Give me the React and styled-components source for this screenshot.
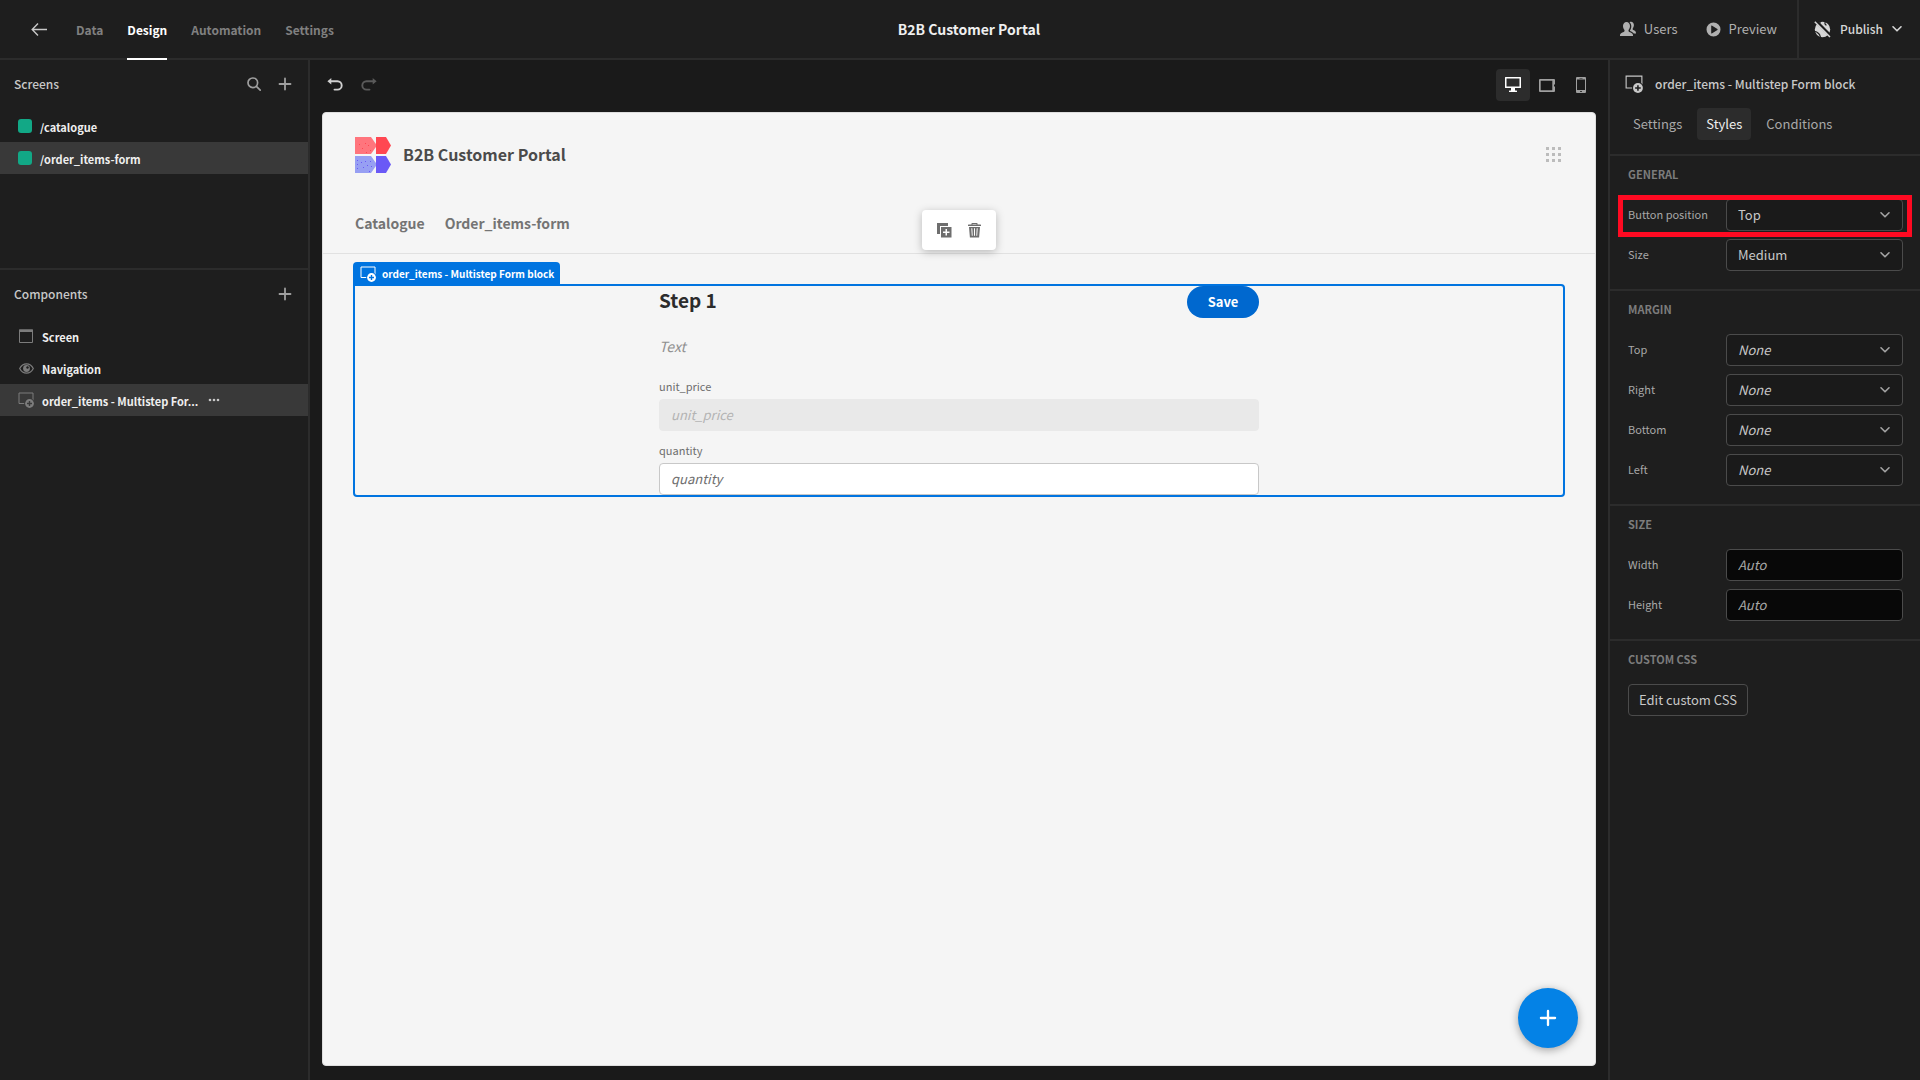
import React, { useState } from 'react';
import styled, { createGlobalStyle, css } from 'styled-components';

const GlobalStyle = createGlobalStyle`
    * {
        box-sizing: border-box;
    }

    body {
        margin: 0;
        background: #1a1a1a;
    }

    body, button, input, select {
        font-family: "Noto Sans CJK SC", "Open Sans", sans-serif;
        font-size: 13px;
        line-height: 20px;
    }

    button {
        border: 0;
        padding: 0;
        background: none;
        color: inherit;
        cursor: pointer;
    }

    svg {
        display: block;
        flex: none;
    }
`;

const Page = styled.div`
    display: flex;
    flex-direction: column;
    min-height: 100vh;
    color: #c8c8c8;
`;

/* top bar */

const TopBar = styled.header`
    display: flex;
    height: 60px;
    padding-left: 18px;
    background: #1e1e1e;
    border-bottom: 2px solid #2c2c2c;
`;

const TopLeft = styled.nav`
    flex: 1;
    display: flex;
    align-items: stretch;
    gap: 24px;
`;

const BackButton = styled.button`
    width: 22px;
    margin-left: 12px;
    color: #c8c8c8;
`;

const TopTab = styled.a`
    display: flex;
    align-items: center;
    margin-bottom: -2px;
    padding-top: 2px;
    border-bottom: 2px solid ${({ $active }) => ($active ? '#fff' : 'transparent')};
    color: ${({ $active }) => ($active ? '#fff' : '#808080')};
    font-size: 12px;
    font-weight: bold;
    text-decoration: none;
`;

const AppTitle = styled.h1`
    align-self: center;
    margin: 0;
    color: #efefef;
    font-size: 14px;
    font-weight: bold;
`;

const TopRight = styled.div`
    flex: 1;
    display: flex;
    justify-content: flex-end;
    gap: 28px;
`;

const TopButton = styled.button`
    display: flex;
    align-items: center;
    gap: 8px;
    color: #b0b0b0;
`;

const PublishButton = styled(TopButton)`
    gap: 9px;
    margin-left: -8px;
    padding: 0 18px 0 15px;
    border-left: 2px solid #2c2c2c;
    color: #d6d6d6;
    font-size: 12px;
    font-weight: 500;
`;

/* left panel */

const Body = styled.div`
    flex: 1;
    display: flex;
`;

const LeftPanel = styled.aside`
    width: 310px;
    background: #1e1e1e;
    border-right: 2px solid #2c2c2c;
`;

const Pane = styled.section`
    min-height: 210px;

    & + & {
        border-top: 2px solid #2c2c2c;
        margin-top: -2px;
    }
`;

const PaneHeader = styled.div`
    display: flex;
    align-items: center;
    gap: 17px;
    height: 48px;
    margin-bottom: 2px;
    padding: 0 16px 0 14px;
    color: #9f9f9f;
`;

const PaneTitle = styled.h2`
    flex: 1;
    margin: 0;
    color: #c8c8c8;
    font-size: 12px;
    font-weight: 500;
`;

const List = styled.ul`
    margin: 0;
    padding: 0;
    list-style: none;
`;

const ListItem = styled.li`
    display: flex;
    align-items: center;
    gap: 8px;
    height: 32px;
    padding-left: 18px;
    background: ${({ $selected }) => ($selected ? '#393939' : 'transparent')};
    color: #7c7c7c;
`;

const ListName = styled.span`
    padding-top: 2px;
    color: #efefef;
    font-size: 11px;
    font-weight: bold;
    white-space: nowrap;
`;

const MoreButton = styled.button`
    margin-left: 2px;
    color: #c8c8c8;
`;

const RoleSquare = styled.span`
    width: 14px;
    height: 14px;
    border-radius: 3px;
    background: #12a886;
`;

/* preview */

const Main = styled.main`
    flex: 1;
    display: flex;
    flex-direction: column;
    min-width: 0;
    padding: 0 12px 14px;
`;

const Toolbar = styled.div`
    display: flex;
    align-items: center;
    height: 52px;
    margin-right: -2px;
    padding: 0 0 2px 4px;
`;

const HistoryButton = styled.button`
    width: 18px;
    margin-right: 16px;
    padding: 0 1px 2px;
    color: ${({ $dim }) => ($dim ? '#5a5a5a' : '#d0d0d0')};
`;

const DeviceButton = styled.button`
    display: grid;
    place-items: center;
    width: 34px;
    height: 32px;
    border-radius: 4px;
    background: ${({ $active }) => ($active ? '#2c2c2c' : 'transparent')};
    color: ${({ $active }) => ($active ? '#fff' : '#9f9f9f')};
`;

const Spacer = styled.div`
    flex: 1;
`;

const Canvas = styled.div`
    position: relative;
    flex: 1;
    background: #f5f5f5;
    border: 1px solid #dedede;
    border-radius: 4px;
    color: #6e6e6e;
`;

const SiteHeader = styled.div`
    padding: 24px 32px 0;
    border-bottom: 1px solid #e1e1e1;
`;

const SiteBrand = styled.div`
    display: flex;
    align-items: center;
    gap: 12px;
`;

const SiteTitle = styled.h2`
    flex: 1;
    margin: 0;
    padding-bottom: 2px;
    color: #4b4b4b;
    font-size: 16px;
    font-weight: bold;
    line-height: 24px;
`;

const SiteNav = styled.nav`
    display: flex;
    gap: 20px;
    margin-top: 38px;
    padding-bottom: 18px;

    a {
        color: #747474;
        font-size: 14px;
        font-weight: bold;
        line-height: 24px;
        text-decoration: none;
    }
`;

const FloatingBar = styled.div`
    position: absolute;
    top: 97px;
    left: 50%;
    transform: translateX(-50%);
    display: flex;
    align-items: center;
    gap: 16px;
    height: 40px;
    padding: 0 15px;
    border-radius: 4px;
    background: #fff;
    box-shadow: 0 2px 8px rgba(0, 0, 0, 0.25);
    color: #6e6e6e;
`;

const SelectedBlock = styled.div`
    position: relative;
    margin: 30px 30px 0;
    border: 2px solid #0074e0;
    border-radius: 0 4px 4px 4px;
`;

const BlockLabel = styled.div`
    position: absolute;
    top: -24px;
    left: -2px;
    display: flex;
    align-items: center;
    gap: 6px;
    height: 24px;
    padding: 0 6px 0 7px;
    border-radius: 4px 4px 0 0;
    background: #0074e0;
    color: #fff;
    font-size: 10px;
    font-weight: bold;
    white-space: nowrap;
`;

const StepForm = styled.form`
    max-width: 600px;
    margin: 0 auto;
`;

const StepHead = styled.div`
    display: flex;
    align-items: center;
    justify-content: space-between;
    height: 32px;

    h3 {
        margin: 0 0 4px;
        color: #2c2c2c;
        font-size: 19px;
        font-weight: bold;
        line-height: 28px;
    }
`;

const SaveButton = styled.button`
    width: 72px;
    height: 32px;
    border-radius: 16px;
    background: #0068cf;
    color: #fff;
    font-weight: bold;
`;

const StepText = styled.p`
    margin: 16px 0 20px;
    color: #909090;
    font-size: 14px;
    font-style: italic;
    line-height: 24px;
`;

const FormField = styled.div`
    & + & {
        margin-top: 11px;
    }

    label {
        display: block;
        margin-bottom: 5px;
        font-size: 11px;
        line-height: 16px;
    }

    input {
        display: block;
        width: 100%;
        height: 32px;
        padding: 0 11px 2px;
        border: 1px solid #c8c8c8;
        border-radius: 4px;
        background: #fff;
    }

    input::placeholder {
        color: #6e6e6e;
        font-style: italic;
        opacity: 1;
    }

    input:disabled {
        border-color: #e9e9e9;
        background: #e9e9e9;
    }

    input:disabled::placeholder {
        color: #b3b3b3;
    }
`;

const AddButton = styled.button`
    position: absolute;
    right: 17px;
    bottom: 17px;
    display: grid;
    place-items: center;
    width: 60px;
    height: 60px;
    border-radius: 50%;
    background: #0482e6;
    box-shadow: 0 2px 8px rgba(0, 0, 0, 0.35);
    color: #fff;
`;

/* right panel */

const RightPanel = styled.aside`
    width: 312px;
    background: #1e1e1e;
    border-left: 2px solid #2c2c2c;
`;

const PanelTitle = styled.div`
    display: flex;
    align-items: center;
    gap: 12px;
    height: 48px;
    padding-left: 15px;

    h2 {
        margin: 0;
        font-size: 12px;
        font-weight: 500;
    }
`;

const PanelTabs = styled.div`
    display: flex;
    gap: 6px;
    padding: 0 14px 14px;
`;

const PanelTab = styled.button`
    height: 32px;
    padding: 0 9px;
    border-radius: 4px;
    background: ${({ $active }) => ($active ? '#2c2c2c' : 'transparent')};
    color: ${({ $active }) => ($active ? '#efefef' : '#a8a8a8')};
`;

const Section = styled.section`
    padding: 9px 17px 18px 18px;
    border-top: 2px solid #2c2c2c;

    h3 {
        margin: 0 0 16px;
        color: #7c7c7c;
        font-size: 11px;
        font-weight: bold;
        line-height: 18px;
    }
`;

const SettingRow = styled.div`
    position: relative;
    display: grid;
    grid-template-columns: 98px 1fr;
    align-items: center;

    & + & {
        margin-top: 8px;
    }

    label {
        padding-bottom: 2px;
        color: #a8a8a8;
        font-size: 11px;
        line-height: 16px;
    }

    ${({ $marked }) => $marked && css`
        &::after {
            content: '';
            position: absolute;
            inset: -4px -9px -6px -10px;
            border: 5px solid #ff0a22;
            pointer-events: none;
        }
    `}
`;

const controlBox = css`
    width: 100%;
    height: 32px;
    padding: 0 11px;
    border: 1px solid #4b4b4b;
    border-radius: 4px;
`;

const SelectWrap = styled.div`
    position: relative;

    svg {
        position: absolute;
        top: 12px;
        right: 13px;
        color: #a3a3a3;
        pointer-events: none;
    }
`;

const Select = styled.select`
    ${controlBox}
    display: block;
    appearance: none;
    background: #1a1a1a;
    color: #c8c8c8;
    font-style: ${({ $empty }) => ($empty ? 'italic' : 'normal')};
`;

const TextInput = styled.input`
    ${controlBox}
    padding-bottom: 2px;
    background: #080808;
    color: #c8c8c8;

    &::placeholder {
        color: #a8a8a8;
        font-style: italic;
        opacity: 1;
    }
`;

const OutlineButton = styled.button`
    height: 32px;
    padding: 0 10px;
    border: 1px solid #4b4b4b;
    border-radius: 4px;
    color: #c8c8c8;
`;

/* icons */

const ArrowLeftIcon = () => (
    <svg width="22" height="18" viewBox="0 0 22 18" fill="none" stroke="currentColor" strokeWidth="1.4">
        <path d="M17 9.500H2M8 3.500L2.200 9.500l5.800 6" />
    </svg>
);

const UsersIcon = () => (
    <svg width="16" height="16" viewBox="0 0 16 16" fill="currentColor">
        <path d="M6.500 1C8.600 1 10 2.700 10 5c0 1.600-.7 3.100-1.500 4v1c0 .5.300.8.800 1 1.900.7 3.700 1.400 3.700 3.300V15H0v-.7c0-1.900 1.800-2.600 3.700-3.300.5-.2.800-.5.800-1V9C3.700 8.100 3 6.600 3 5c0-2.300 1.400-4 3.500-4z" />
        <path d="M9.500 1.200C10 .9 10.500.8 11 .8c1.700 0 2.900 1.400 2.900 3.300 0 1.300-.5 2.500-1.200 3.300v.8c0 .4.200.6.600.8 1.500.6 2.700 1.400 2.700 3v.5h-2.300c-.5-1-1.800-1.900-3.700-2.600V9.400c.8-1.100 1.300-2.700 1.300-4.200 0-1.700-.7-3.200-1.800-4z" />
    </svg>
);

const PlayIcon = () => (
    <svg width="15" height="15" viewBox="0 0 15 15" fill="currentColor">
        <path fillRule="evenodd" d="M7.500.5a7 7 0 1 0 0 14 7 7 0 0 0 0-14zM5.200 3.900a.4.4 0 0 1 .6-.3l5.600 3.500a.5.500 0 0 1 0 .8l-5.600 3.500a.4.4 0 0 1-.6-.3z" />
    </svg>
);

const GlobeStrikeIcon = () => (
    <svg width="17" height="17" viewBox="0 0 17 17">
        <circle cx="8.500" cy="8.500" r="7.700" fill="currentColor" />
        <path d="M6 .5c.5 2-1 3-3.500 3M11.500.8c-1.500 1.500 0 3 1 3.500M1 10.500c2 0 3 1.500 4 2.500s1 2 1.500 3.500" fill="none" stroke="#1e1e1e" strokeWidth="1.200" />
        <path d="M1.800 0L17 15.200" stroke="#1e1e1e" strokeWidth="3.200" />
        <path d="M.8.800l15.200 15.200" stroke="currentColor" strokeWidth="1.500" />
    </svg>
);

const ChevronIcon = () => (
    <svg width="10" height="8" viewBox="0 0 10 8" fill="none" stroke="currentColor" strokeWidth="1.600" strokeLinecap="round" strokeLinejoin="round">
        <path d="M1 1.800l4 4 4-4" />
    </svg>
);

const SearchIcon = () => (
    <svg width="14" height="14" viewBox="0 0 14 14" fill="none" stroke="currentColor" strokeWidth="1.700" strokeLinecap="round">
        <circle cx="5.800" cy="5.800" r="4.800" />
        <path d="M9.400 9.400l3.800 3.800" />
    </svg>
);

const PlusIcon = ({ size = 14 }) => (
    <svg width={size} height={size} viewBox="0 0 14 14" fill="none" stroke="currentColor" strokeWidth="1.800" strokeLinecap="round">
        <path d="M7 1.500v11M1.500 7h11" />
    </svg>
);

const UndoIcon = ({ flip }) => (
    <svg width="16" height="13" viewBox="0 0 16 13">
        <g transform={flip ? 'translate(16 0) scale(-1 1)' : undefined}>
            <path d="M4 3.200h6.500a4.200 4.200 0 0 1 0 8.400H7.500" fill="none" stroke="currentColor" strokeWidth="1.900" strokeLinecap="round" />
            <path d="M4.300 0v6.400L.4 3.200z" fill="currentColor" />
        </g>
    </svg>
);

const DesktopIcon = () => (
    <svg width="16" height="16" viewBox="0 0 16 16" fill="currentColor">
        <path fillRule="evenodd" d="M.5 0h15a.5.5 0 0 1 .5.5v10a.5.5 0 0 1-.5.5H10v2.500h1.500a.5.5 0 0 1 .5.5v1H4v-1a.5.5 0 0 1 .5-.5H6V11H.5a.5.5 0 0 1-.5-.5V.5A.5.5 0 0 1 .5 0zM1.500 1.500v8h13v-8z" />
    </svg>
);

const TabletIcon = () => (
    <svg width="16" height="13" viewBox="0 0 16 13" fill="currentColor">
        <path fillRule="evenodd" d="M1 0h14a1 1 0 0 1 1 1v4.500h-1v2h1V12a1 1 0 0 1-1 1H1a1 1 0 0 1-1-1V1a1 1 0 0 1 1-1zM1.700 1.700v9.600H13.300V1.700z" />
    </svg>
);

const PhoneIcon = () => (
    <svg width="10" height="16" viewBox="0 0 10 16" fill="currentColor">
        <path fillRule="evenodd" d="M1 0h8a1 1 0 0 1 1 1v14a1 1 0 0 1-1 1H1a1 1 0 0 1-1-1V1a1 1 0 0 1 1-1zM1 2.500v10.500h8V2.500zM3.500 1v.6h3V1zM4.200 14v1h1.600v-1z" />
    </svg>
);

const BlockIcon = ({ size = 16, hole }) => (
    <svg width={size} height={size} viewBox="0 0 16 16">
        <path d="M1 1h14v10.500H1z" fill="none" stroke="currentColor" strokeWidth="1" />
        <circle cx="11.500" cy="11.500" r="5.300" fill={hole} />
        <circle cx="11.500" cy="11.500" r="4.400" fill="currentColor" />
        <path d="M11.500 9v5M9 11.500h5" stroke={hole} strokeWidth="1.400" />
    </svg>
);

const ScreenIcon = () => (
    <svg width="16" height="14" viewBox="0 0 16 14">
        <path d="M1.500 1h13v12.500h-13z" fill="none" stroke="currentColor" />
        <path d="M1 .500h14v2.500H1z" fill="currentColor" />
    </svg>
);

const EyeIcon = () => (
    <svg width="16" height="11" viewBox="-1 0 16 11">
        <path d="M.7 5.500C2.200 2.500 4.700.8 7.500.8s5.300 1.700 6.800 4.700c-1.500 3-4 4.700-6.800 4.700S2.200 8.500.7 5.500z" fill="none" stroke="currentColor" strokeWidth="1.200" />
        <circle cx="7.500" cy="5.500" r="3.400" fill="currentColor" />
        <circle cx="8.500" cy="4.500" r="1.200" fill="#1e1e1e" />
    </svg>
);

const MoreIcon = () => (
    <svg width="12" height="4" viewBox="0 0 12 4" fill="currentColor">
        <circle cx="2" cy="2" r="1.300" />
        <circle cx="6" cy="2" r="1.300" />
        <circle cx="10" cy="2" r="1.300" />
    </svg>
);

const DuplicateIcon = () => (
    <svg width="15" height="15" viewBox="0 0 15 15" fill="currentColor">
        <path d="M0 0h11v3H3v8H0z" />
        <path fillRule="evenodd" d="M4 4h10.500v10.500H4zM8.500 6v2.500H6v1.500h2.500v2.500H10V10h2.500V8.500H10V6z" />
    </svg>
);

const TrashIcon = () => (
    <svg width="13" height="15" viewBox="0 0 13 15" fill="currentColor">
        <path fillRule="evenodd" d="M4 0h5a.5.500 0 0 1 .5.500V1.500h3a.5.500 0 0 1 .5.500v1H0V2a.5.500 0 0 1 .5-.5h3V.5A.5.500 0 0 1 4 0zM4.500.9v.6h4V.9z" />
        <path fillRule="evenodd" d="M1 4h11l-.9 10.500H1.900zM3.300 5.200l.5 7.500h.9l-.4-7.500zM6 5.200v7.500h1V5.200zM8.700 5.200l-.4 7.500h.9l.5-7.500z" />
    </svg>
);

const LogoIcon = () => (
    <svg width="36" height="36" viewBox="0 0 36 36">
        <path d="M0 0h16l6 8.500-6 8.500H0z" fill="#ff757d" />
        <path d="M21 0h10l5 8.500-5 8.500H21z" fill="#ff4752" />
        <path d="M0 19h16l6 8.500-6 8.500H0z" fill="#979ff3" />
        <path d="M21 19h10l5 8.500-5 8.500H21z" fill="#6a59f6" />
        <path d="M4 7h1v1H4zM10 6h1v1h-1zM13 8h1v1h-1zM7 11h1v1H7zM15 13h1v1h-1zM11 15h1v1h-1z" fill="#ff4752" />
        <path d="M2 23h1v1H2zM2 27h1v1H2zM2 31h1v1H2zM6 25h1v1H6zM8 30h1v1H8zM10 24h1v1h-1zM12 28h1v1h-1zM15 24h1v1h-1zM16 29h1v1h-1zM14 34h1v1h-1zM21 27h1v1h-1z" fill="#6a59f6" />
    </svg>
);

const DotsIcon = () => (
    <svg width="17" height="16" viewBox="0 0 17 16" fill="#bcbcbc">
        {[0, 6, 12].map(y => [0, 6, 12].map(x => (
            <rect x={x} y={y} width="3" height="3" key={`${x}-${y}`} />
        )))}
    </svg>
);

const topTabs = ['Data', 'Design', 'Automation', 'Settings'];
const screens = ['/catalogue', '/order_items-form'];
const components = [
    { name: 'Screen', icon: <ScreenIcon /> },
    { name: 'Navigation', icon: <EyeIcon /> },
    { name: 'order_items - Multistep Form block', icon: <BlockIcon hole="#393939" />, selected: true },
];
const panelTabs = ['Settings', 'Styles', 'Conditions'];
const sides = ['Top', 'Right', 'Bottom', 'Left'];

const SelectSetting = ({ id, label, value, options, marked }) => (
    <SettingRow $marked={marked}>
        <label htmlFor={id}>{label}</label>
        <SelectWrap>
            <Select id={id} defaultValue={value} $empty={value === 'None'}>
                {options.map(option => <option key={option}>{option}</option>)}
            </Select>
            <ChevronIcon />
        </SelectWrap>
    </SettingRow>
);

const TextSetting = ({ id, label }) => (
    <SettingRow>
        <label htmlFor={id}>{label}</label>
        <TextInput id={id} type="text" placeholder="Auto" />
    </SettingRow>
);

const Header = () => (
    <TopBar>
        <TopLeft>
            <BackButton aria-label="Back"><ArrowLeftIcon /></BackButton>
            {topTabs.map(tab => (
                <TopTab href="#" $active={tab === 'Design'} key={tab}>{tab}</TopTab>
            ))}
        </TopLeft>
        <AppTitle>B2B Customer Portal</AppTitle>
        <TopRight>
            <TopButton><UsersIcon />Users</TopButton>
            <TopButton><PlayIcon />Preview</TopButton>
            <PublishButton><GlobeStrikeIcon />Publish<ChevronIcon /></PublishButton>
        </TopRight>
    </TopBar>
);

const Sidebar = () => (
    <LeftPanel>
        <Pane>
            <PaneHeader>
                <PaneTitle>Screens</PaneTitle>
                <button aria-label="Search"><SearchIcon /></button>
                <button aria-label="Add screen"><PlusIcon /></button>
            </PaneHeader>
            <List>
                {screens.map((screen, i) => (
                    <ListItem $selected={i === 1} key={screen}>
                        <RoleSquare />
                        <ListName>{screen}</ListName>
                    </ListItem>
                ))}
            </List>
        </Pane>
        <Pane>
            <PaneHeader>
                <PaneTitle>Components</PaneTitle>
                <button aria-label="Add component"><PlusIcon /></button>
            </PaneHeader>
            <List>
                {components.map(({ name, icon, selected }) => (
                    <ListItem $selected={selected} key={name}>
                        {icon}
                        <ListName>{name.length > 30 ? `${name.substring(0, 27)}...` : name}</ListName>
                        {selected && <MoreButton aria-label="More"><MoreIcon /></MoreButton>}
                    </ListItem>
                ))}
            </List>
        </Pane>
    </LeftPanel>
);

const Preview = () => {
    const [device, setDevice] = useState('desktop');

    return (
        <Main>
            <Toolbar>
                <HistoryButton aria-label="Undo"><UndoIcon /></HistoryButton>
                <HistoryButton aria-label="Redo" $dim><UndoIcon flip /></HistoryButton>
                <Spacer />
                <DeviceButton aria-label="Desktop" $active={device === 'desktop'} onClick={() => setDevice('desktop')}><DesktopIcon /></DeviceButton>
                <DeviceButton aria-label="Tablet" $active={device === 'tablet'} onClick={() => setDevice('tablet')}><TabletIcon /></DeviceButton>
                <DeviceButton aria-label="Mobile" $active={device === 'mobile'} onClick={() => setDevice('mobile')}><PhoneIcon /></DeviceButton>
            </Toolbar>
            <Canvas>
                <SiteHeader>
                    <SiteBrand>
                        <LogoIcon />
                        <SiteTitle>B2B Customer Portal</SiteTitle>
                        <DotsIcon />
                    </SiteBrand>
                    <SiteNav>
                        <a href="#">Catalogue</a>
                        <a href="#">Order_items-form</a>
                    </SiteNav>
                </SiteHeader>
                <SelectedBlock>
                    <BlockLabel><BlockIcon hole="#0074e0" />order_items - Multistep Form block</BlockLabel>
                    <StepForm>
                        <StepHead>
                            <h3>Step 1</h3>
                            <SaveButton type="button">Save</SaveButton>
                        </StepHead>
                        <StepText>Text</StepText>
                        <FormField>
                            <label htmlFor="unit_price">unit_price</label>
                            <input id="unit_price" type="text" placeholder="unit_price" disabled />
                        </FormField>
                        <FormField>
                            <label htmlFor="quantity">quantity</label>
                            <input id="quantity" type="text" placeholder="quantity" />
                        </FormField>
                    </StepForm>
                </SelectedBlock>
                <FloatingBar>
                    <button aria-label="Duplicate"><DuplicateIcon /></button>
                    <button aria-label="Delete"><TrashIcon /></button>
                </FloatingBar>
                <AddButton aria-label="Add"><PlusIcon size={18} /></AddButton>
            </Canvas>
        </Main>
    );
};

const StylesPanel = () => (
    <RightPanel>
        <PanelTitle>
            <BlockIcon size={18} hole="#1e1e1e" />
            <h2>order_items - Multistep Form block</h2>
        </PanelTitle>
        <PanelTabs>
            {panelTabs.map(tab => (
                <PanelTab $active={tab === 'Styles'} key={tab}>{tab}</PanelTab>
            ))}
        </PanelTabs>
        <Section>
            <h3>GENERAL</h3>
            <SelectSetting id="position" label="Button position" value="Top" options={['Top', 'Bottom']} marked />
            <SelectSetting id="size" label="Size" value="Medium" options={['Small', 'Medium', 'Large']} />
        </Section>
        <Section>
            <h3>MARGIN</h3>
            {sides.map(side => (
                <SelectSetting id={`margin-${side}`} label={side} value="None" options={['None', '4px', '8px', '16px']} key={side} />
            ))}
        </Section>
        <Section>
            <h3>SIZE</h3>
            <TextSetting id="width" label="Width" />
            <TextSetting id="height" label="Height" />
        </Section>
        <Section>
            <h3>CUSTOM CSS</h3>
            <OutlineButton>Edit custom CSS</OutlineButton>
        </Section>
    </RightPanel>
);

const App = () => (
    <Page>
        <GlobalStyle />
        <Header />
        <Body>
            <Sidebar />
            <Preview />
            <StylesPanel />
        </Body>
    </Page>
);

export default App;
